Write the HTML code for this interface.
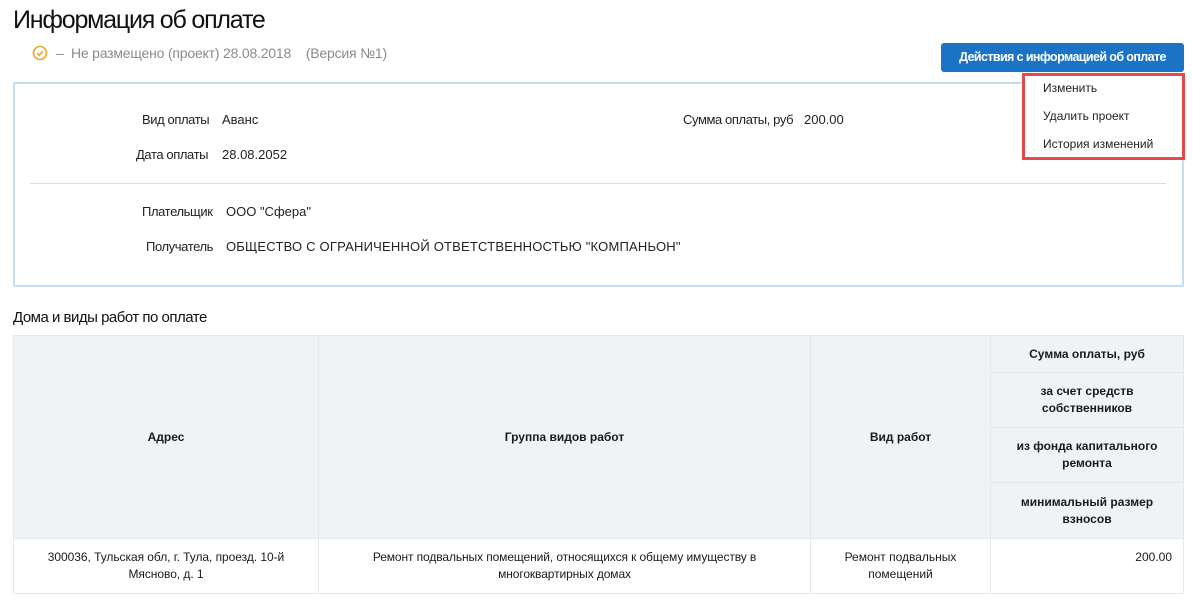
<!DOCTYPE html>
<html><head><meta charset="utf-8"><style>
*{margin:0;padding:0;box-sizing:border-box}
body{width:1193px;height:603px;background:#fff;font-family:"Liberation Sans",sans-serif;color:#1a1a1a;position:relative;overflow:hidden}
.a{position:absolute;white-space:nowrap}
.lbl{font-size:13px;color:#222}
.cell{position:absolute;border:1px solid #e3e8ee;display:flex;align-items:center;justify-content:center;text-align:center;font-size:12px;line-height:17px}
.hd{background:#f0f3f6;font-weight:bold}
</style></head><body>
<div class="a" style="left:13px;top:6px;font-size:25px;letter-spacing:-1.2px;color:#111">Информация об оплате</div>
<svg class="a" style="left:32px;top:45px" width="16" height="16" viewBox="0 0 16 16"><circle cx="8" cy="8" r="6.5" fill="none" stroke="#e8a623" stroke-width="1.6"/><path d="M5 8.2l2.1 2.1L11 6.3" fill="none" stroke="#e8a623" stroke-width="1.6"/></svg>
<div class="a" style="left:56px;top:45px;font-size:14px;color:#8a8a8a;letter-spacing:-0.2px">–&nbsp; Не размещено (проект) 28.08.2018 &nbsp;&nbsp; (Версия №1)</div>
<div class="a" style="left:941px;top:43px;width:243px;height:29px;background:#1a73c4;border-radius:3px;color:#fff;font-size:12.5px;font-weight:bold;text-align:center;line-height:29px;letter-spacing:-0.6px">Действия с информацией об оплате</div>
<div class="a" style="left:13px;top:82px;width:1171px;height:205px;border:2px solid #c6def2;border-radius:2px"></div>
<div class="a" style="left:30px;top:183px;width:1136px;height:1px;background:#dcdcdc"></div>
<div class="a lbl" style="left:142px;top:112px;letter-spacing:-0.4px">Вид оплаты</div>
<div class="a lbl" style="left:222px;top:112px">Аванс</div>
<div class="a lbl" style="left:136px;top:147px;letter-spacing:-0.4px">Дата оплаты</div>
<div class="a lbl" style="left:222px;top:147px">28.08.2052</div>
<div class="a lbl" style="left:683px;top:112px;letter-spacing:-0.4px">Сумма оплаты, руб</div>
<div class="a lbl" style="left:804px;top:112px">200.00</div>
<div class="a lbl" style="left:142px;top:204px;letter-spacing:-0.4px">Плательщик</div>
<div class="a lbl" style="left:226px;top:204px">ООО "Сфера"</div>
<div class="a lbl" style="left:146px;top:239px;letter-spacing:-0.4px">Получатель</div>
<div class="a lbl" style="left:226px;top:239px;letter-spacing:0.2px">ОБЩЕСТВО С ОГРАНИЧЕННОЙ ОТВЕТСТВЕННОСТЬЮ "КОМПАНЬОН"</div>
<div class="a" style="left:1022px;top:73px;width:163px;height:87px;background:#fff;border:3px solid #e24b4b"></div>
<div class="a lbl" style="left:1043px;top:81px;font-size:12px">Изменить</div>
<div class="a lbl" style="left:1043px;top:109px;font-size:12px">Удалить проект</div>
<div class="a lbl" style="left:1043px;top:137px;font-size:12px">История изменений</div>
<div class="a" style="left:13px;top:309px;font-size:15px;letter-spacing:-0.5px;color:#111">Дома и виды работ по оплате</div>
<div class="cell hd" style="left:13px;top:335px;width:306px;height:204px">Адрес</div>
<div class="cell hd" style="left:318px;top:335px;width:493px;height:204px">Группа видов работ</div>
<div class="cell hd" style="left:810px;top:335px;width:181px;height:204px">Вид работ</div>
<div class="cell hd" style="left:990px;top:335px;width:194px;height:38px">Сумма оплаты, руб</div>
<div class="cell hd" style="left:990px;top:372px;width:194px;height:56px">за счет средств<br>собственников</div>
<div class="cell hd" style="left:990px;top:427px;width:194px;height:56px">из фонда капитального<br>ремонта</div>
<div class="cell hd" style="left:990px;top:482px;width:194px;height:57px">минимальный размер<br>взносов</div>
<div class="cell" style="left:13px;top:538px;width:306px;height:56px;align-items:flex-start;padding-top:10px;letter-spacing:-0.05px">300036, Тульская обл, г. Тула, проезд. 10-й<br>Мясново, д. 1</div>
<div class="cell" style="left:318px;top:538px;width:493px;height:56px;align-items:flex-start;padding-top:10px;letter-spacing:-0.1px">Ремонт подвальных помещений, относящихся к общему имуществу в<br>многоквартирных домах</div>
<div class="cell" style="left:810px;top:538px;width:181px;height:56px;align-items:flex-start;padding-top:10px">Ремонт подвальных<br>помещений</div>
<div class="cell" style="left:990px;top:538px;width:194px;height:56px;align-items:flex-start;justify-content:flex-end;padding:10px 11px 0 0">200.00</div>
</body></html>
